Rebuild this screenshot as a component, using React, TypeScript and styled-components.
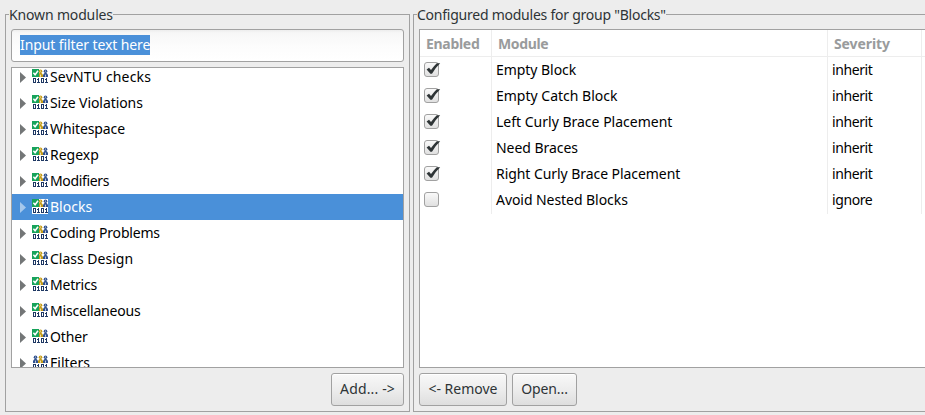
import React from "react";
import styled, { createGlobalStyle } from "styled-components";

const Global = createGlobalStyle`
  * { box-sizing: border-box; }
  html, body { margin: 0; padding: 0; overflow: hidden; background: #ededed; }
  body { font: 14px/20px "Noto Sans", "Open Sans", sans-serif; color: #000; }
`;

const Dialog = styled.main`
  display: flex;
  gap: 3px;
  width: 931px;
  height: 415px;
  padding: 5px 0 3px 5px;
`;

const Group = styled.fieldset<{ $width: number }>`
  flex: none;
  width: ${(p) => p.$width}px;
  height: 407px;
  min-width: 0;
  margin: 0;
  padding: 5px 5px 0;
  border: 1px solid #a1a1a1;
`;

const Legend = styled.legend<{ $spacing: number }>`
  height: 19px;
  margin-left: -2px;
  padding: 0;
  line-height: 19px;
  color: #2e3436;
  white-space: nowrap;
  letter-spacing: ${(p) => p.$spacing}px;
`;

const FilterField = styled.div`
  display: flex;
  align-items: center;
  height: 33px;
  padding: 0 8px;
  border: 1px solid #a1a1a1;
  border-radius: 3px;
  background: linear-gradient(#ededed, #f7f7f7 3px, #fcfcfc 50%, #fff);
`;

const SelectedText = styled.span`
  height: 20px;
  line-height: 20px;
  margin-top: -1px;
  background: #4a90d9;
  color: #fff;
  white-space: nowrap;
  letter-spacing: -0.1px;
`;

const Tree = styled.div`
  height: 301px;
  margin-top: 5px;
  border: 1px solid #a1a1a1;
  background: #fff;
  overflow: hidden;
`;

const TreeList = styled.div`
  margin-top: -4px;
`;

const TreeRow = styled.div<{ $selected: boolean }>`
  display: flex;
  align-items: center;
  height: 26px;
  padding-left: 8px;
  white-space: nowrap;
  background: ${(p) => (p.$selected ? "#4a90d9" : "transparent")};
  color: ${(p) => (p.$selected ? "#fff" : "#000")};
`;

const Label = styled.span<{ $spacing?: number }>`
  letter-spacing: ${(p) => p.$spacing ?? 0}px;
`;

const Arrow = styled.svg<{ $selected: boolean }>`
  width: 6px;
  height: 11px;
  margin-right: 6px;
  fill: ${(p) => (p.$selected ? "#a5c8ec" : "#737677")};
`;

const IconSvg = styled.svg`
  width: 16px;
  height: 16px;
  margin-right: 2px;
`;

const ButtonBar = styled.div<{ $end?: boolean }>`
  display: flex;
  justify-content: ${(p) => (p.$end ? "flex-end" : "flex-start")};
  gap: 5px;
  margin-top: 5px;
`;

const Button = styled.button<{ $width: number; $spacing?: number }>`
  width: ${(p) => p.$width}px;
  height: 33px;
  padding: 0 0 1px;
  border: 1px solid #a1a1a1;
  border-radius: 3px;
  background: linear-gradient(#f8f8f8, #ededed 50%, #dedede);
  box-shadow: inset 0 1px #fff;
  font: inherit;
  letter-spacing: ${(p) => p.$spacing ?? 0}px;
  color: #2e3436;
  white-space: nowrap;
`;

const Table = styled.div`
  height: 339px;
  border: 1px solid #a1a1a1;
  background: linear-gradient(#ededed, #ededed) 71px 0 / 1px 184px no-repeat,
    linear-gradient(#ededed, #ededed) 407px 0 / 1px 184px no-repeat,
    linear-gradient(#ededed, #ededed) 501px 0 / 1px 184px no-repeat, #fff;
`;

const Header = styled.div`
  display: grid;
  grid-template-columns: 72px 336px 1fr;
  height: 27px;
  padding-left: 6px;
  border-bottom: 1px solid #ededed;
  color: #999b9c;
  font-weight: 700;
  line-height: 27px;
`;

const TableRow = styled.div`
  display: grid;
  grid-template-columns: 72px 336px 1fr;
  align-items: center;
  height: 26px;
  padding-left: 4px;
  white-space: nowrap;
`;

const CheckSvg = styled.svg`
  width: 17px;
  height: 16px;
  display: block;
`;

const ZERO = ["111", "101", "101", "101", "111"];
const ONE = ["010", "110", "010", "010", "111"];

function Digits() {
  return (
    <g fill="#1e3763" shapeRendering="crispEdges">
      {[ZERO, ONE, ZERO, ONE].flatMap((digit, d) =>
        digit.flatMap((line, y) =>
          [...line].map((bit, x) =>
            bit === "1" ? <rect key={`${d}${x}${y}`} x={1 + d * 4 + x} y={9 + y} width="1" height="1" /> : null
          )
        )
      )}
    </g>
  );
}

function Person({ x, color }: { x: number; color: string }) {
  return (
    <g transform={`translate(${x} 0)`} fill={color}>
      <circle cx="2.5" cy="2.2" r="1.8" />
      <path d="M0 8V5.8L1.5 4h2L5 5.8V8z" />
      <path d="M2.5 5.6v2.2M2 2.1h1" stroke="#fff" strokeWidth=".7" />
    </g>
  );
}

function ModuleIcon({ checked }: { checked: boolean }) {
  return (
    <IconSvg viewBox="0 0 16 16">
      <rect width="16" height="15" fill="#fff" />
      {!checked && <Person x={1} color="#31528f" />}
      <Person x={6} color="#c49b17" />
      <Person x={11} color="#31528f" />
      {checked && (
        <>
          <path d="M0 0h7v8H0z" fill="#17a35b" />
          <path d="M1.4 3.8l1.7 2L6 1.7" stroke="#fff" strokeWidth="1.5" fill="none" />
        </>
      )}
      <Digits />
    </IconSvg>
  );
}

function Checkbox({ checked }: { checked: boolean }) {
  return (
    <CheckSvg viewBox="0 0 17 16">
      <defs>
        <linearGradient id="box" x2="0" y2="1">
          <stop stopColor="#fafafa" />
          <stop offset="1" stopColor="#dfdfdf" />
        </linearGradient>
      </defs>
      <rect x=".5" y=".5" width="14" height="14" rx="2.5" fill="url(#box)" stroke="#a1a1a1" />
      {checked && <path d="M2.6 7.4L5 5.8l2 2.2Q10 3.8 12.8 1.2H16.2Q11 6 8 11.7H6.4z" fill="#2e3436" />}
    </CheckSvg>
  );
}

const MODULES: [string, number][] = [
  ["SevNTU checks", 0.17],
  ["Size Violations", -0.07],
  ["Whitespace", -0.1],
  ["Regexp", 0],
  ["Modifiers", -0.35],
  ["Blocks", 0],
  ["Coding Problems", -0.2],
  ["Class Design", 0],
  ["Metrics", -0.22],
  ["Miscellaneous", -0.2],
  ["Other", -0.15],
  ["Filters", 0],
];

const CONFIGURED: [string, string, number][] = [
  ["Empty Block", "inherit", -0.05],
  ["Empty Catch Block", "inherit", 0],
  ["Left Curly Brace Placement", "inherit", 0],
  ["Need Braces", "inherit", -0.05],
  ["Right Curly Brace Placement", "inherit", -0.06],
  ["Avoid Nested Blocks", "ignore", -0.06],
];

export default function App() {
  return (
    <>
      <Global />
      <Dialog>
        <Group $width={405}>
          <Legend $spacing={-0.15}>Known modules</Legend>
          <FilterField><SelectedText>Input filter text here</SelectedText></FilterField>
          <Tree>
            <TreeList>
              {MODULES.map(([name, spacing]) => (
                <TreeRow key={name} $selected={name === "Blocks"}>
                  <Arrow $selected={name === "Blocks"} viewBox="0 0 6 11"><path d="M0 0L6 5.5 0 11z" /></Arrow>
                  <ModuleIcon checked={name !== "Filters"} />
                  <Label $spacing={spacing}>{name}</Label>
                </TreeRow>
              ))}
            </TreeList>
          </Tree>
          <ButtonBar $end><Button $width={73} $spacing={0.15}>Add... -&gt;</Button></ButtonBar>
        </Group>
        <Group $width={530}>
          <Legend $spacing={-0.24}>Configured modules for group "Blocks"</Legend>
          <Table>
            <Header>
              <Label $spacing={-0.3}>Enabled</Label>
              <Label $spacing={-0.35}>Module</Label>
              <Label $spacing={-0.1}>Severity</Label>
            </Header>
            {CONFIGURED.map(([name, severity, spacing]) => (
              <TableRow key={name}>
                <Checkbox checked={severity !== "ignore"} />
                <Label $spacing={spacing}>{name}</Label>
                <Label $spacing={-0.4}>{severity}</Label>
              </TableRow>
            ))}
          </Table>
          <ButtonBar><Button $width={88}>&lt;- Remove</Button><Button $width={65} $spacing={-0.1}>Open...</Button></ButtonBar>
        </Group>
      </Dialog>
    </>
  );
}
